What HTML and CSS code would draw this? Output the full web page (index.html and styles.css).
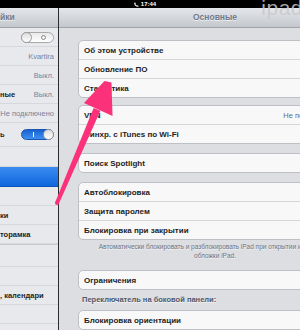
FILE: index.html
```html
<!DOCTYPE html>
<html>
<head>
    <meta charset="utf-8">
    <link rel="stylesheet" href="styles.css">
</head>
<body>
    <div id="status-bar">
        <span class="clock">
            <svg class="phone" width="5" height="5" viewBox="0 0 10 10"><path d="M2 0.5 L3.6 2.8 L2.7 3.8 Q3.8 6 6.2 7.3 L7.2 6.4 L9.5 8 L8.2 9.6 Q4.5 9.4 2 6.8 Q0.3 4.6 0.4 1.8 Z" fill="#fff"/></svg>
            17:44
        </span>
    </div>

    <div id="screen">
        <!-- left list, only its right edge is on screen -->
        <div id="sidebar">
            <div class="nav-bar sidebar-title">йки</div>
            <div class="side-row">
                <span class="label"></span>
                <span class="switch off"><span class="knob"></span><span class="mark-o"></span></span>
            </div>
            <div class="side-row"><span class="label"></span><span class="value">Kvartira</span></div>
            <div class="side-row"><span class="label"></span><span class="value">Выкл.</span></div>
            <div class="side-row"><span class="label">ные</span><span class="value">Выкл.</span></div>
            <div class="side-row"><span class="label"></span><span class="value">Не подключено</span></div>
            <div class="side-row tall">
                <span class="label">ь</span>
                <span class="switch on"><span class="mark-i"></span><span class="knob"></span></span>
            </div>
            <div class="side-gap"></div>
            <div class="side-row selected"></div>
            <div class="side-row"></div>
            <div class="side-row"><span class="label">ки</span></div>
            <div class="side-row"><span class="label">торамка</span></div>
            <div class="side-gap wide"></div>
            <div class="side-row"></div>
            <div class="side-row"><span class="label">, календари</span></div>
            <div class="side-row"></div>
        </div>

        <div id="detail">
            <div class="nav-bar detail-title">Основные</div>

            <div class="group first">
                <div class="cell">Об этом устройстве</div>
                <div class="cell">Обновление ПО</div>
                <div class="cell">Статистика</div>
            </div>

            <div class="group gap-small">
                <div class="cell"><span>VPN</span><span class="cell-value">Не подключено</span></div>
                <div class="cell">Синхр. с iTunes по Wi-Fi</div>
            </div>

            <div class="group">
                <div class="cell">Поиск Spotlight</div>
            </div>

            <div class="group">
                <div class="cell">Автоблокировка</div>
                <div class="cell">Защита паролем</div>
                <div class="cell">Блокировка при закрытии</div>
            </div>
            <div class="group-footer">Автоматически блокировать и разблокировать iPad при открытии и закрытии<br>обложки iPad.</div>

            <div class="group">
                <div class="cell">Ограничения</div>
            </div>
            <div class="group-header">Переключатель на боковой панели:</div>
            <div class="group flush">
                <div class="cell">Блокировка ориентации</div>
            </div>
        </div>
    </div>

    <div class="watermark">ipad</div>

    <!-- pink pointer drawn over the screenshot -->
    <svg class="arrow" width="300" height="330" viewBox="0 0 300 330">
        <polygon points="55.2,202.2 93.6,108.0 100.4,110.8 58.8,203.8" fill="#fb3179"/>
        <circle cx="57" cy="203" r="2" fill="#fb3179"/>
        <polygon points="104.5,81 111.5,82.5 112.5,116 84,103" fill="#fb3179"/>
    </svg>
</body>
</html>
```

FILE: styles.css
```css
html, body {
    margin: 0;
    padding: 0;
    overflow: hidden;
}

body {
    width: 300px;
    height: 330px;
    position: relative;
    background-color: #dddee2;
    font-family: "Liberation Sans", Arial, sans-serif;
}

#status-bar {
    height: 8px;
    background-color: #000000;
    display: flex;
    justify-content: center;
    align-items: center;
    padding-right: 10px;
}

.clock {
    display: flex;
    align-items: center;
    gap: 2px;
    color: #ffffff;
    font-size: 6px;
    font-weight: bold;
    line-height: 8px;
}

#screen {
    display: flex;
    height: 322px;
}

.nav-bar {
    height: 20px;
    box-sizing: border-box;
    background: linear-gradient(#e4e6ea, #c4c8ce);
    border-bottom: 1px solid #a0a5ac;
    color: #6f7888;
    font-size: 8.5px;
    font-weight: bold;
    line-height: 19px;
    text-shadow: 0 1px 0 rgba(255, 255, 255, 0.7);
}

/* sidebar */
#sidebar {
    width: 58px;
    flex: none;
    background-color: #e8e9ec;
    border-right: 1px solid #2b2c2f;
}

.side-row {
    height: 19px;
    box-sizing: border-box;
    border-bottom: 1px solid #d6d8dc;
    display: flex;
    justify-content: space-between;
    align-items: center;
    padding-right: 4px;
    font-size: 7.5px;
}

.side-row.tall {
    height: 24px;
}

.side-row.selected {
    height: 20px;
    background: linear-gradient(#3b8cf1, #0f67dc);
    border-bottom: 1px solid #0c55b8;
}

.side-gap {
    height: 20px;
    border-bottom: 1px solid #d6d8dc;
    box-sizing: border-box;
}

.side-gap.wide {
    height: 23px;
    border-top: 1px solid #c9cbcf;
}

.label {
    color: #1e1e1e;
    font-weight: bold;
    font-size: 7.5px;
    white-space: nowrap;
}

.value {
    color: #7584a0;
    white-space: nowrap;
}

.switch {
    width: 33px;
    height: 11px;
    box-sizing: border-box;
    border-radius: 6px;
    display: flex;
    align-items: center;
    justify-content: space-between;
}

.switch.off {
    background: linear-gradient(#e9e9e9, #ffffff);
    border: 1px solid #a9a9a9;
}

.switch.on {
    background: linear-gradient(#1a62cf, #3f8ff2);
    border: 1px solid #1856b3;
}

.knob {
    width: 11px;
    height: 11px;
    box-sizing: border-box;
    border-radius: 50%;
    margin: -1px;
    background: linear-gradient(#dcdcdc, #ffffff);
    border: 1px solid #9c9c9c;
}

.mark-o {
    width: 5px;
    height: 5px;
    box-sizing: border-box;
    border-radius: 50%;
    border: 1px solid #8a8a8a;
    margin-right: 7px;
}

.mark-i {
    width: 1px;
    height: 5px;
    background-color: #ffffff;
    margin-left: 11px;
}

/* detail pane */
#detail {
    width: 312px;
    flex: none;
    background-color: #dddee2;
}

.detail-title {
    text-align: center;
}

.group {
    margin: 9px 19px 0 19px;
    border: 1px solid #bec0c5;
    border-radius: 5px;
    background-color: #f8f8f8;
    overflow: hidden;
}

.group.first {
    margin-top: 12px;
}

.group.gap-small {
    margin-top: 7px;
}

.group.flush {
    margin-top: 0;
}

.cell {
    height: 18px;
    display: flex;
    justify-content: space-between;
    align-items: center;
    padding: 0 14px 0 5px;
    color: #1e1e1e;
    font-size: 8px;
    font-weight: bold;
    white-space: nowrap;
}

.cell + .cell {
    border-top: 1px solid #d5d6da;
}

.cell-value {
    color: #5d6f92;
    font-weight: normal;
    font-size: 7.5px;
}

.group-footer {
    height: 20px;
    padding-top: 2px;
    box-sizing: border-box;
    text-align: center;
    color: #6c7381;
    font-size: 6.5px;
    line-height: 9px;
    white-space: nowrap;
    text-shadow: 0 1px 0 rgba(255, 255, 255, 0.6);
}

.group-footer + .group {
    margin-top: 10px;
}

.group-header {
    padding: 5px 0 5px 23px;
    color: #4d5667;
    font-size: 7.5px;
    font-weight: bold;
    line-height: 10px;
    text-shadow: 0 1px 0 rgba(255, 255, 255, 0.7);
}

.watermark {
    position: absolute;
    top: -4px;
    right: -3px;
    color: rgba(200, 200, 200, 0.85);
    font-size: 21px;
    letter-spacing: 0.5px;
}

.arrow {
    position: absolute;
    top: 0;
    left: 0;
    pointer-events: none;
}
```
